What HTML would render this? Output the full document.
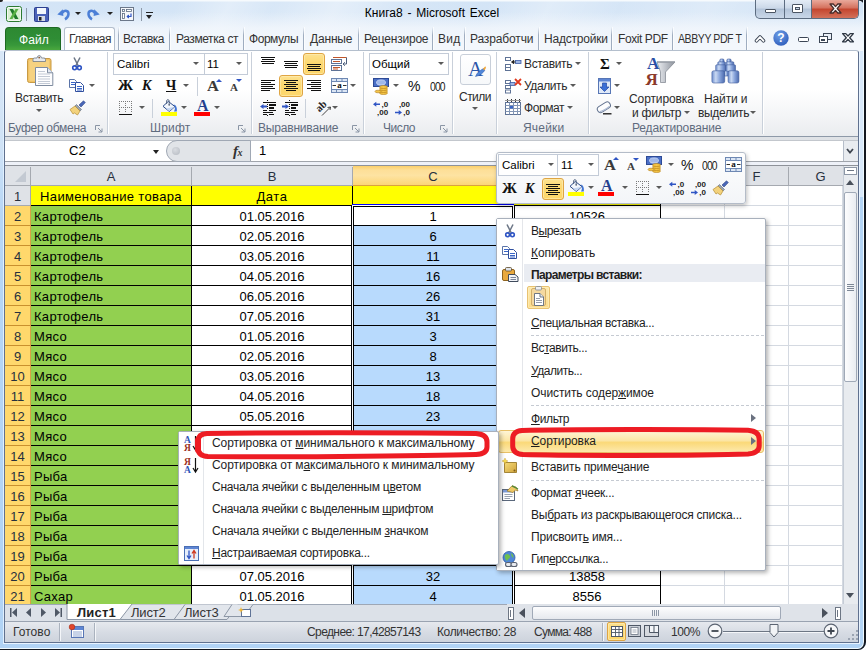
<!DOCTYPE html>
<html lang="ru">
<head>
<meta charset="utf-8">
<title>Книга8 - Microsoft Excel</title>
<style>
*{box-sizing:border-box;margin:0;padding:0}
html,body{width:866px;height:650px;overflow:hidden;background:#cfe0f3}
body{position:relative;font-family:"Liberation Sans",sans-serif;font-size:12px;color:#1e1e1e}
.abs,.abs>*{position:absolute}
#win{position:absolute;left:0;top:0;width:866px;height:650px;overflow:hidden;background:linear-gradient(180deg,#d8e7f7 0,#d8e7f7 60px,#cfe2f6 150px,#b6d6f6 215px,#b1d3f5 100%)}
#glass{position:absolute;left:0;top:0;width:866px;height:51px;background:
 linear-gradient(180deg,#f6fafd 0,#f6fafd 1px,rgba(255,255,255,0) 2px),
 linear-gradient(180deg,rgba(243,247,252,0) 12px,rgba(243,247,252,.8) 28px,#f3f7fc 44px),
 linear-gradient(115deg,rgba(255,255,255,0) 0,rgba(255,255,255,0) 20%,rgba(255,255,255,.35) 26%,rgba(255,255,255,.1) 31%,rgba(255,255,255,.4) 38%,rgba(255,255,255,.05) 46%,rgba(255,255,255,0) 55%,rgba(255,255,255,.3) 62%,rgba(255,255,255,.05) 70%,rgba(255,255,255,.25) 80%,rgba(255,255,255,0) 90%),
 linear-gradient(180deg,#d3e4f6,#d8e7f7)}
.t{position:absolute;white-space:pre;line-height:14px;height:14px}
.tc{text-align:center}
/* title */
#title{left:299px;width:266px;top:6px;text-align:center;font-size:12px;color:#000;word-spacing:1.5px}
/* tabs */
.tab{position:absolute;top:32px;height:14px;line-height:14px;font-size:12px;color:#333;white-space:pre;letter-spacing:-0.25px}
.tsep{position:absolute;top:27px;width:1px;height:23px;background:linear-gradient(180deg,rgba(150,165,185,0),#9fadc0 35%,#9fadc0 100%);box-shadow:1px 0 0 rgba(255,255,255,.7)}
#ribbon{position:absolute;left:4px;top:50px;width:855px;height:87px;border:1px solid #7f8da3;border-top-color:#b4bfcd;border-bottom-color:#8e99a8;border-radius:3px 3px 0 0;
 background:linear-gradient(180deg,#ffffff 0,#ffffff 45%,#f4f5f7 75%,#eaecef 100%)}
.gsep{position:absolute;top:52px;width:2px;height:82px;background:linear-gradient(90deg,#c9d0da 0,#c9d0da 1px,#fff 1px)}
.glab{position:absolute;top:121px;height:14px;line-height:14px;font-size:12px;color:#5f6b7e;white-space:pre;letter-spacing:-0.3px}
.rl{position:absolute;height:14px;line-height:14px;font-size:12px;color:#2b2b2b;white-space:pre;letter-spacing:-0.3px}
.dd{position:absolute;width:0;height:0;border-left:3px solid transparent;border-right:3px solid transparent;border-top:3px solid #5a5a5a}
.box{position:absolute;background:#fff;border:1px solid #c3cbd7}
.hl{position:absolute;border:1px solid #dfa543;border-radius:3px;background:linear-gradient(180deg,#fde291 0,#fdd870 45%,#fdd76c 100%);box-shadow:inset 0 0 0 1px rgba(255,240,190,.55)}
svg{position:absolute;overflow:visible}
.ct{font-size:13px;color:#000}
.mi{position:absolute;white-space:pre;height:14px;line-height:14px;font-size:12px;color:#1e1e1e;letter-spacing:-.2px}
.msep{position:absolute;left:531px;width:233px;height:0;border-top:1px dashed #c5cad2}
</style>
</head>
<body>
<div id="win">
<!-- ===== title bar ===== -->
<div id="glass"></div>
<div style="position:absolute;left:0;top:0;width:3px;height:2px;background:#222;border-bottom-right-radius:3px"></div>
<div style="position:absolute;left:858px;top:-2px;width:10px;height:9px;background:radial-gradient(circle at 0 100%,rgba(0,0,0,0) 0,rgba(0,0,0,0) 6px,#1a1f28 7px)"></div>
<!-- excel icon -->
<svg style="left:6px;top:6px" width="17" height="17" viewBox="0 0 17 17">
 <rect x="0.5" y="0.5" width="15" height="15" rx="2" fill="#f4faf2" stroke="#2c7a32"/>
 <rect x="2" y="2" width="12" height="12" fill="#d9efd3"/>
 <path d="M3.5 3 L7 3 L12.5 13 L9 13 Z" fill="#1f7a2a"/>
 <path d="M12.5 3 L9.5 3 L3.5 13 L6.5 13 Z" fill="#59b045"/>
</svg>
<div style="position:absolute;left:26px;top:8px;width:1px;height:13px;background:#8d99a8"></div>
<!-- save -->
<svg style="left:34px;top:7px" width="15" height="15" viewBox="0 0 15 15">
 <rect x="0.5" y="0.5" width="14" height="14" rx="1" fill="#4b62b8" stroke="#2c3f8f"/>
 <rect x="3" y="1" width="9" height="6" fill="#f4f7fc"/>
 <rect x="4" y="9" width="7" height="5" fill="#d7dbe6"/>
 <rect x="5" y="10" width="2.5" height="3.5" fill="#222"/>
</svg>
<!-- undo -->
<svg style="left:56px;top:7px" width="14" height="14" viewBox="0 0 14 14">
 <path d="M1.300 7.500 L6.800 2.200 L7.400 9 Z" fill="#4c7fd6"/>
 <path d="M6.500 5.600 C9 2.600 12.800 3.600 12.500 7.200 C12.300 9.600 11 11.200 9 12.300" fill="none" stroke="#4c7fd6" stroke-width="2.500"/>
</svg>
<div class="dd" style="left:75px;top:12px;border-top-color:#222"></div>
<!-- redo -->
<svg style="left:87px;top:7px" width="14" height="14" viewBox="0 0 14 14">
 <path d="M12.700 7.500 L7.200 2.200 L6.600 9 Z" fill="#4c7fd6"/>
 <path d="M7.500 5.600 C5 2.600 1.200 3.600 1.500 7.200 C1.700 9.600 3 11.200 5 12.300" fill="none" stroke="#4c7fd6" stroke-width="2.500"/>
</svg>
<div class="dd" style="left:107px;top:12px;border-top-color:#222"></div>
<!-- form icon -->
<svg style="left:120px;top:7px" width="14" height="14" viewBox="0 0 14 14">
 <rect x="0.500" y="0.500" width="13" height="13" fill="#f5f7fa" stroke="#6b7789"/>
 <rect x="2.500" y="2.500" width="2" height="2" fill="#fff" stroke="#5d6b80" stroke-width=".8"/>
 <rect x="6.500" y="2.500" width="5" height="2" fill="#fff" stroke="#5d6b80" stroke-width=".8"/>
 <rect x="2.500" y="6.500" width="2" height="5" fill="#fff" stroke="#5d6b80" stroke-width=".8"/>
 <path d="M11 6.500 V9.500 H7.500 M8.800 8 L7.300 9.500 L8.800 11" stroke="#2f55c4" stroke-width="1.200" fill="none"/>
</svg>
<div style="position:absolute;left:141px;top:8px;width:1px;height:13px;background:#8d99a8"></div>
<div style="position:absolute;left:146px;top:12px;width:7px;height:1px;background:#222"></div>
<div class="dd" style="left:146px;top:15px;border-top-color:#222;border-left-width:3.5px;border-right-width:3.5px;border-top-width:4px"></div>
<div id="title" class="t">Книга8 - Microsoft Excel</div>
<!-- window controls -->
<div style="position:absolute;left:755px;top:0;width:104px;height:19px;border:1px solid #5c6c80;border-top:0;border-radius:0 0 5px 5px;overflow:hidden;background:linear-gradient(180deg,#e3ecf6 0,#cbd8e8 45%,#b3c4d9 50%,#c9d7e8 100%)">
 <div style="position:absolute;left:28px;top:0;width:1px;height:18px;background:#5c6c80"></div>
 <div style="position:absolute;left:55px;top:0;width:1px;height:18px;background:#5c6c80"></div>
 <div style="position:absolute;left:56px;top:0;width:47px;height:18px;background:linear-gradient(180deg,#e9a99b 0,#d4705c 45%,#c4452e 50%,#d3715a 100%)"></div>
 <div style="position:absolute;left:9px;top:9px;width:11px;height:4px;border:1px solid #4b5563;background:#fff;border-radius:1px"></div>
 <div style="position:absolute;left:36px;top:4px;width:11px;height:9px;border:1px solid #4b5563;background:#fff;border-radius:1px"></div>
 <div style="position:absolute;left:39px;top:7px;width:5px;height:3px;border:1px solid #4b5563;background:#c8d5e6"></div>
 <svg style="left:73px;top:3px" width="13" height="11" viewBox="0 0 13 11"><path d="M1 1 H4.200 L6.500 3.600 L8.800 1 H12 L8.200 5.500 L12 10 H8.800 L6.500 7.400 L4.200 10 H1 L4.800 5.500 Z" fill="#fff" stroke="#4a2e2c" stroke-width="1.300" stroke-linejoin="round"/></svg>
</div>
<!-- ===== ribbon tabs ===== -->
<div style="position:absolute;left:5px;top:27px;width:56px;height:23px;border:1px solid #1d6a22;border-bottom:0;border-radius:4px 4px 0 0;background:linear-gradient(180deg,#2d8932 0,#2f8d35 50%,#38983a 78%,#4aa83e 100%)"></div>
<div class="tab" style="left:19px;color:#fff;top:33px;letter-spacing:0.1px">Файл</div>
<div style="position:absolute;left:64px;top:27px;width:51px;height:24px;border:1px solid #b4bfcd;border-bottom:0;border-radius:3px 3px 0 0;background:linear-gradient(180deg,#fdfeff,#fff)"></div>
<div class="tab" style="left:69px;letter-spacing:-0.53px">Главная</div>
<div class="tab" style="left:123px;letter-spacing:-0.52px">Вставка</div>
<div class="tab" style="left:176px;letter-spacing:-0.42px">Разметка ст</div>
<div class="tab" style="left:249px;letter-spacing:-0.45px">Формулы</div>
<div class="tab" style="left:310px;letter-spacing:-0.17px">Данные</div>
<div class="tab" style="left:364px;letter-spacing:-0.21px">Рецензирое</div>
<div class="tab" style="left:438px;letter-spacing:0.3px">Вид</div>
<div class="tab" style="left:470px;letter-spacing:-0.14px">Разработчи</div>
<div class="tab" style="left:544px;letter-spacing:-0.2px">Надстройки</div>
<div class="tab" style="left:618px;letter-spacing:-0.42px">Foxit PDF</div>
<div class="tab" style="left:678px;transform:scaleX(.88);transform-origin:0 0;letter-spacing:-0.5px">ABBYY PDF T</div>
<div class="tsep" style="left:118px"></div><div class="tsep" style="left:169px"></div><div class="tsep" style="left:243px"></div>
<div class="tsep" style="left:303px"></div><div class="tsep" style="left:358px"></div><div class="tsep" style="left:432px"></div>
<div class="tsep" style="left:464px"></div><div class="tsep" style="left:538px"></div><div class="tsep" style="left:611px"></div>
<div class="tsep" style="left:672px"></div><div class="tsep" style="left:746px"></div>
<!-- right-side tab icons -->
<svg style="left:755px;top:35px" width="10" height="8" viewBox="0 0 10 8"><path d="M1.500 5.800 L5 2 L8.500 5.800" fill="none" stroke="#3c4655" stroke-width="3.600" stroke-linejoin="round" stroke-linecap="round"/><path d="M1.500 5.800 L5 2 L8.500 5.800" fill="none" stroke="#fff" stroke-width="1.800" stroke-linejoin="round" stroke-linecap="round"/></svg>
<svg style="left:773px;top:30px" width="16" height="16" viewBox="0 0 16 16"><defs><radialGradient id="hg" cx=".4" cy=".3" r=".8"><stop offset="0" stop-color="#6fa0e8"/><stop offset="1" stop-color="#2a58b8"/></radialGradient></defs><circle cx="8" cy="8" r="7.7" fill="url(#hg)"/><text x="8" y="12.3" text-anchor="middle" font-family="Liberation Sans,sans-serif" font-weight="700" font-size="12" fill="#fff">?</text></svg>
<div style="position:absolute;left:798px;top:37px;width:11px;height:5px;border:1px solid #3c4655;border-radius:1.5px;background:#fff"></div>
<div style="position:absolute;left:823px;top:33px;width:9px;height:7px;border:1px solid #3c4655;background:#e9eff7"></div>
<div style="position:absolute;left:819px;top:36px;width:9px;height:7px;border:1px solid #3c4655;background:#fff"></div>
<div style="position:absolute;left:821px;top:39px;width:4px;height:2px;border:1px solid #3c4655"></div>
<svg style="left:842px;top:33px" width="12" height="10" viewBox="0 0 12 10"><path d="M0.600 0.600 H3.800 L6 3 L8.200 0.600 H11.400 L7.700 4.700 L11.400 8.800 H8.200 L6 6.400 L3.800 8.800 H0.600 L4.300 4.700 Z" fill="#fff" stroke="#2f3845" stroke-width="1.300" stroke-linejoin="round"/></svg>
<!-- ===== ribbon body ===== -->
<div id="ribbon"></div>
<div class="gsep" style="left:107px"></div><div class="gsep" style="left:251px"></div><div class="gsep" style="left:363px"></div>
<div class="gsep" style="left:452px"></div><div class="gsep" style="left:496px"></div><div class="gsep" style="left:588px"></div><div class="gsep" style="left:762px"></div>
<!-- group labels -->
<div class="glab" style="left:8px;letter-spacing:-0.28px">Буфер обмена</div>
<div class="glab" style="left:150px;letter-spacing:0.2px">Шрифт</div>
<div class="glab" style="left:258px;letter-spacing:-0.19px">Выравнивание</div>
<div class="glab" style="left:383px;letter-spacing:-0.5px">Число</div>
<div class="glab" style="left:523px;letter-spacing:0.2px">Ячейки</div>
<div class="glab" style="left:632px;letter-spacing:-0.15px">Редактирование</div>
<!-- dialog launchers -->
<svg style="left:95px;top:125px" width="8" height="8" viewBox="0 0 8 8"><path d="M0.5 5 V0.5 H5" fill="none" stroke="#8a95a5"/><path d="M3 3 L7 7 M7 3.5 V7 H3.5" fill="none" stroke="#8a95a5"/></svg>
<svg style="left:238px;top:125px" width="8" height="8" viewBox="0 0 8 8"><path d="M0.5 5 V0.5 H5" fill="none" stroke="#8a95a5"/><path d="M3 3 L7 7 M7 3.5 V7 H3.5" fill="none" stroke="#8a95a5"/></svg>
<svg style="left:352px;top:125px" width="8" height="8" viewBox="0 0 8 8"><path d="M0.5 5 V0.5 H5" fill="none" stroke="#8a95a5"/><path d="M3 3 L7 7 M7 3.5 V7 H3.5" fill="none" stroke="#8a95a5"/></svg>
<svg style="left:440px;top:125px" width="8" height="8" viewBox="0 0 8 8"><path d="M0.5 5 V0.5 H5" fill="none" stroke="#8a95a5"/><path d="M3 3 L7 7 M7 3.5 V7 H3.5" fill="none" stroke="#8a95a5"/></svg>

<!-- Clipboard group -->
<svg style="left:26px;top:55px" width="30" height="33" viewBox="0 0 30 33">
 <rect x="1.500" y="3.500" width="23.500" height="24" rx="2" fill="#f1c263" stroke="#c79a45"/>
 <rect x="3.300" y="5.300" width="20" height="20.500" rx="1" fill="#f8d88e" opacity=".7"/>
 <path d="M7 6.500 V4.500 Q7 3 8.500 3 H11 Q11.500 0.500 13.200 0.500 Q15 0.500 15.500 3 H18 Q19.500 3 19.500 4.500 V6.500 Z" fill="#e6e9ee" stroke="#6f7986" stroke-width=".8"/>
 <circle cx="13.200" cy="2.600" r=".9" fill="#8a5a3a"/>
 <path d="M9.500 12.500 H21.500 L26.800 17.800 V30.500 H9.500 Z" fill="#fdfdfe" stroke="#7f8ca0"/>
 <path d="M21.500 12.500 V17.800 H26.800" fill="#e3e8f0" stroke="#7f8ca0"/>
 <path d="M12 16.500 H19 M12 19 H24 M12 21.500 H24 M12 24 H24 M12 26.500 H24 M12 28.500 H24" stroke="#c3cad5" stroke-width="1"/>
</svg>
<div class="rl" style="left:15px;top:91px;letter-spacing:-0.34px">Вставить</div>
<div class="dd" style="left:36px;top:109px"></div>
<!-- scissors -->
<svg style="left:72px;top:57px" width="10" height="14" viewBox="0 0 10 14">
 <path d="M2 0.500 L6.300 9 M8 0.500 L3.700 9" stroke="#6b7585" stroke-width="1.500" fill="none"/>
 <circle cx="2.600" cy="10.800" r="1.900" fill="none" stroke="#2f55c4" stroke-width="1.600"/>
 <circle cx="7.400" cy="10.800" r="1.900" fill="none" stroke="#2f55c4" stroke-width="1.600"/>
</svg>
<!-- copy -->
<svg style="left:69px;top:79px" width="15" height="13" viewBox="0 0 15 13">
 <path d="M0.500 0.500 H5.500 L7.500 2.500 V8.500 H0.500 Z" fill="#fff" stroke="#5b74a8"/>
 <path d="M2 3.500 H6 M2 5.500 H6" stroke="#3a66c8" stroke-width="1"/>
 <path d="M6.500 3.500 H11.500 L14.500 6.500 V12.500 H6.500 Z" fill="#fff" stroke="#2f4f9f"/>
 <path d="M8 7.500 H13 M8 9.500 H13 M8 11 H13" stroke="#3a66c8" stroke-width="1"/>
</svg>
<div class="dd" style="left:89px;top:84px"></div>
<!-- format painter -->
<svg style="left:69px;top:100px" width="17" height="16" viewBox="0 0 17 16">
 <path d="M10 5 L14.5 0.8 L16.3 2.6 L12 7 Z" fill="#4a67b8" stroke="#2f4687" stroke-width=".6"/>
 <path d="M7.5 4.5 L12.5 9.5 L11 11 L6 6 Z" fill="#9aa3b0" stroke="#5e6877" stroke-width=".6"/>
 <path d="M6 6 L11 11 L8.5 15 L5.5 13 L4 14 L1 9.5 Z" fill="#f3d27c" stroke="#b58e35" stroke-width=".7"/>
</svg>
<!-- Font group -->
<div class="box" style="left:113px;top:53px;width:92px;height:22px"></div>
<div class="box" style="left:204px;top:53px;width:44px;height:22px"></div>
<div class="rl" style="left:117px;top:57px;color:#000;letter-spacing:0;font-size:11.500px">Calibri</div>
<div class="rl" style="left:207px;top:57px;color:#000;letter-spacing:0;font-size:11.500px">11</div>
<div class="dd" style="left:193px;top:62px"></div>
<div class="dd" style="left:236px;top:62px"></div>
<div class="rl" style="left:118px;top:78px;font:bold 14px/16px 'Liberation Serif',serif;height:16px;color:#111;letter-spacing:0;transform:scaleX(1.08);transform-origin:0 0">Ж</div>
<div class="rl" style="left:142px;top:78px;font:italic bold 14px/16px 'Liberation Serif',serif;height:16px;color:#111;letter-spacing:0">К</div>
<div class="rl" style="left:166px;top:78px;font:bold 14px/16px 'Liberation Serif',serif;height:16px;color:#111;letter-spacing:0;text-decoration:underline">Ч</div>
<div class="dd" style="left:183px;top:84px"></div>
<div style="position:absolute;left:197px;top:77px;width:1px;height:19px;background:#c9d0da"></div>
<div class="rl" style="left:207px;top:78px;font:bold 15px/16px 'Liberation Serif',serif;height:16px;color:#3a3a3a;letter-spacing:0;transform:scaleX(1.1);transform-origin:0 0">А</div>
<div class="dd" style="left:216px;top:79px;border-top:0;border-bottom:3px solid #2f55c4"></div>
<div class="rl" style="left:230px;top:81px;font:bold 11px/12px 'Liberation Serif',serif;height:12px;color:#3a3a3a;letter-spacing:0">А</div>
<div class="dd" style="left:236px;top:79px;border-top-color:#2f55c4"></div>
<!-- borders icon -->
<svg style="left:119px;top:101px" width="14" height="14" viewBox="0 0 14 14" shape-rendering="crispEdges">
 <path d="M0 0.5 H13 M0 6.500 H13 M0.500 0 V12 M6.500 0 V12 M12.500 0 V12" stroke="#7a7a7a" stroke-width="1" stroke-dasharray="1 1" fill="none"/>
 <path d="M0 13 H13" stroke="#111" stroke-width="1"/>
</svg>
<div class="dd" style="left:139px;top:106px"></div>
<div style="position:absolute;left:152px;top:99px;width:1px;height:19px;background:#c9d0da"></div>
<!-- fill bucket -->
<svg style="left:161px;top:99px" width="17" height="18" viewBox="0 0 17 18">
 <path d="M12.500 5.500 C15.500 6 16.300 9 15.800 12.600 H13 C13.800 11 14.200 9 13.800 7.500 Z" fill="#3f74d6"/>
 <path d="M7.300 2.400 L13.900 7.600 L8.400 12.500 L2 7.300 Z" fill="#f2f6fc" stroke="#2a4a8a" stroke-width="1"/>
 <path d="M5 9.600 L8.400 12.300 L13.500 7.800 Z" fill="#c4d6f2"/>
 <path d="M5.600 5 V1.800 C5.600 0.300 8.200 0.300 8.200 1.800 V5.500" fill="none" stroke="#4d5f7c" stroke-width=".9"/>
 <circle cx="8.200" cy="5.800" r=".9" fill="#59657a"/>
 <rect x="0" y="13" width="16" height="4" fill="#ffff00"/>
</svg>
<div class="dd" style="left:181px;top:106px"></div>
<!-- font color -->
<div class="rl" style="left:197px;top:98px;font:bold 16px/16px 'Liberation Serif',serif;height:16px;color:#24408e;letter-spacing:0">А</div>
<div style="position:absolute;left:194px;top:112px;width:16px;height:4px;background:#ff0000"></div>
<div class="dd" style="left:214px;top:106px"></div>
<!-- Alignment group -->
<div class="hl" style="left:303px;top:53px;width:22px;height:22px"></div>
<div class="hl" style="left:279px;top:75px;width:24px;height:22px"></div>
<svg style="left:261px;top:57px" width="15" height="8" viewBox="0 0 15 8" shape-rendering="crispEdges"><g fill="#111"><rect x="0" y="0" width="14" height="1"/><rect x="1" y="2" width="12" height="1"/><rect x="0" y="4" width="14" height="1"/><rect x="1" y="6" width="12" height="1"/></g></svg>
<svg style="left:284px;top:61px" width="15" height="8" viewBox="0 0 15 8" shape-rendering="crispEdges"><g fill="#111"><rect x="0" y="0" width="14" height="1"/><rect x="1" y="2" width="12" height="1"/><rect x="0" y="4" width="14" height="1"/><rect x="1" y="6" width="12" height="1"/></g></svg>
<svg style="left:307px;top:64px" width="15" height="8" viewBox="0 0 15 8" shape-rendering="crispEdges"><g fill="#111"><rect x="0" y="0" width="14" height="1"/><rect x="1" y="2" width="12" height="1"/><rect x="0" y="4" width="14" height="1"/><rect x="1" y="6" width="12" height="1"/></g></svg>
<!-- wrap text -->
<svg style="left:331px;top:56px" width="17" height="16" viewBox="0 0 17 16">
 <rect x="0.5" y="3.5" width="10" height="4" fill="#fff" stroke="#5f7396"/><rect x="0.5" y="9.5" width="10" height="5" fill="#fff" stroke="#5f7396"/>
 <path d="M2 1.5 H15.5 M2 5.5 H9 M2 11.5 H9 M2 13 H7" stroke="#c0562a" stroke-width="1"/>
 <path d="M15.5 1.5 V8 L12 8 M13.8 6.2 L12 8 L13.8 9.8" stroke="#4d5f7c" fill="none" stroke-width="1"/>
</svg>
<svg style="left:261px;top:80px" width="15" height="12" viewBox="0 0 15 12" shape-rendering="crispEdges"><g fill="#111"><rect x="0" y="0" width="14" height="1"/><rect x="0" y="2" width="10" height="1"/><rect x="0" y="4" width="14" height="1"/><rect x="0" y="6" width="12" height="1"/><rect x="0" y="8" width="14" height="1"/><rect x="0" y="10" width="9" height="1"/></g></svg>
<svg style="left:284px;top:80px" width="15" height="12" viewBox="0 0 15 12" shape-rendering="crispEdges"><g fill="#111"><rect x="0" y="0" width="14" height="1"/><rect x="2" y="2" width="10" height="1"/><rect x="0" y="4" width="14" height="1"/><rect x="2" y="6" width="10" height="1"/><rect x="0" y="8" width="14" height="1"/><rect x="2" y="10" width="10" height="1"/></g></svg>
<svg style="left:307px;top:80px" width="15" height="12" viewBox="0 0 15 12" shape-rendering="crispEdges"><g fill="#111"><rect x="0" y="0" width="14" height="1"/><rect x="4" y="2" width="10" height="1"/><rect x="0" y="4" width="14" height="1"/><rect x="4" y="6" width="10" height="1"/><rect x="0" y="8" width="14" height="1"/><rect x="4" y="10" width="10" height="1"/></g></svg>
<!-- merge -->
<svg style="left:331px;top:78px" width="17" height="15" viewBox="0 0 17 15">
 <rect x="0.5" y="0.5" width="16" height="14" fill="#dbe6f5" stroke="#6e88b3"/>
 <path d="M0.5 3.5 H16.5 M0.5 11.5 H16.5 M5.5 0.5 V3.5 M11 0.5 V3.5 M5.5 11.5 V14.5 M11 11.5 V14.5" stroke="#6e88b3" fill="none"/>
 <rect x="1" y="4" width="15" height="7" fill="#fff"/>
 <text x="8.5" y="10.3" text-anchor="middle" font-family="Liberation Serif,serif" font-weight="700" font-size="9" fill="#111">a</text>
 <path d="M1.5 7.5 H5 M15.5 7.5 H12" stroke="#333" stroke-width="1"/>
</svg>
<div class="dd" style="left:350px;top:84px"></div>
<!-- indents -->
<svg style="left:260px;top:100px" width="17" height="16" viewBox="0 0 17 16" shape-rendering="crispEdges">
 <g fill="#111"><rect x="7" y="0" width="1" height="16" fill="#555" opacity=".0"/><rect x="3" y="2" width="13" height="1"/><rect x="9" y="4" width="7" height="2"/><rect x="9" y="7" width="5" height="2"/><rect x="9" y="10" width="7" height="1"/><rect x="3" y="10" width="4" height="1"/><rect x="3" y="12" width="10" height="1"/><rect x="3" y="14" width="4" height="1"/><rect x="9" y="14" width="5" height="1"/>
 <rect x="7" y="0" width="1" height="1"/><rect x="7" y="4" width="1" height="1"/><rect x="7" y="6" width="1" height="1"/><rect x="7" y="8" width="1" height="1"/><rect x="7" y="12" width="1" height="1"/><rect x="7" y="15" width="1" height="1"/></g>
 <path d="M0 6.500 L3.500 4 V5.500 H7 V7.500 H3.500 V9 Z" fill="#2f55c4" shape-rendering="auto"/>
</svg>
<svg style="left:282px;top:100px" width="17" height="16" viewBox="0 0 17 16" shape-rendering="crispEdges">
 <g fill="#111"><rect x="3" y="2" width="13" height="1"/><rect x="9" y="4" width="7" height="2"/><rect x="9" y="7" width="5" height="2"/><rect x="9" y="10" width="7" height="1"/><rect x="3" y="10" width="4" height="1"/><rect x="3" y="12" width="10" height="1"/><rect x="3" y="14" width="4" height="1"/><rect x="9" y="14" width="5" height="1"/>
 <rect x="7" y="0" width="1" height="1"/><rect x="7" y="4" width="1" height="1"/><rect x="7" y="6" width="1" height="1"/><rect x="7" y="8" width="1" height="1"/><rect x="7" y="12" width="1" height="1"/><rect x="7" y="15" width="1" height="1"/></g>
 <path d="M7 6.500 L3.500 4 V5.500 H0 V7.500 H3.500 V9 Z" fill="#2f55c4" shape-rendering="auto"/>
</svg>
<div style="position:absolute;left:305px;top:99px;width:1px;height:19px;background:#c9d0da"></div>
<!-- orientation -->
<svg style="left:314px;top:100px" width="18" height="16" viewBox="0 0 18 16">
 <text x="0" y="0" transform="translate(5.500,12.500) rotate(-45)" font-family="Liberation Serif,serif" font-size="10.500" font-weight="700" fill="#222">ab</text>
 <path d="M8 15.500 L16.500 7 M16.500 7 L13.500 7.500 M16.500 7 L16 10" stroke="#444" stroke-width="1" fill="none"/>
</svg>
<div class="dd" style="left:332px;top:106px"></div>

<!-- Number group -->
<div class="box" style="left:369px;top:53px;width:80px;height:22px"></div>
<div class="rl" style="left:372px;top:57px;color:#000;letter-spacing:0;font-size:11.500px">Общий</div>
<div class="dd" style="left:438px;top:62px"></div>
<svg style="left:373px;top:78px" width="18" height="17" viewBox="0 0 18 17">
 <rect x="0.5" y="0.5" width="15" height="8" fill="#4a6fc6" stroke="#2d4a96"/>
 <ellipse cx="8" cy="4.5" rx="4.5" ry="2.6" fill="#9fb8ea" stroke="#dfe8fa" stroke-width=".7"/>
 <g fill="#f5c646" stroke="#b07a18" stroke-width=".6"><ellipse cx="10.5" cy="15" rx="4" ry="1.5"/><ellipse cx="10.5" cy="13" rx="4" ry="1.5"/><ellipse cx="10.5" cy="11" rx="4" ry="1.5"/><ellipse cx="10.5" cy="9" rx="4" ry="1.5"/><ellipse cx="5" cy="13.5" rx="3" ry="1.3"/></g>
</svg>
<div class="dd" style="left:393px;top:84px"></div>
<div class="rl" style="left:408px;top:78px;font-size:14px;line-height:16px;height:16px;color:#111;letter-spacing:0">%</div>
<div class="rl" style="left:430px;top:79px;font-size:12px;line-height:16px;height:16px;color:#222;letter-spacing:-1px;transform:scale(.86,1.12);transform-origin:0 50%">000</div>
<svg style="left:372px;top:100px" width="17" height="17" viewBox="0 0 17 17">
 <path d="M1 4.200 L4.300 1.700 V3.400 H8 V5 H4.300 V6.700 Z" fill="#2f55c4"/>
 <text x="16.200" y="7" text-anchor="end" font-family="Liberation Sans,sans-serif" font-weight="700" font-size="8" fill="#222">,0</text>
 <text x="16.200" y="15.300" text-anchor="end" font-family="Liberation Sans,sans-serif" font-weight="700" font-size="8" fill="#222">,00</text>
</svg>
<svg style="left:394px;top:100px" width="17" height="17" viewBox="0 0 17 17">
 <text x="16" y="7" text-anchor="end" font-family="Liberation Sans,sans-serif" font-weight="700" font-size="8" fill="#222">,00</text>
 <path d="M8 12.500 L4.700 10 V11.700 H1 V13.300 H4.700 V15 Z" fill="#2f55c4"/>
 <text x="16" y="15.300" text-anchor="end" font-family="Liberation Sans,sans-serif" font-weight="700" font-size="8" fill="#222">,0</text>
</svg>

<!-- Styles group -->
<div style="position:absolute;left:460px;top:54px;width:31px;height:31px;border:1px solid #c8cfd9;border-radius:3px;background:linear-gradient(180deg,#fff,#f6f8fa)"></div>
<svg style="left:466px;top:58px" width="22" height="22" viewBox="0 0 22 22">
 <text x="2" y="18" font-family="Liberation Serif,serif" font-size="21" fill="#2b55a8">A</text>
 <path d="M9.500 18.500 C11 14.500 14 12.500 17.500 10.500 L19 12 C17 15 14.500 17.500 9.500 18.500 Z" fill="#4f86d9" stroke="#2b55a8" stroke-width=".5"/>
 <path d="M16.800 11 L19.300 8.300 L20 9.800 L18.600 12.300 Z" fill="#f0a63a"/>
</svg>
<div class="rl" style="left:459px;top:90px;letter-spacing:-0.52px">Стили</div>
<div class="dd" style="left:472px;top:107px"></div>
<!-- Cells group -->
<svg style="left:505px;top:56px" width="17" height="16" viewBox="0 0 17 16">
 <g fill="#fff" stroke="#5f7396" stroke-width="1"><rect x="0.500" y="1.500" width="5" height="3"/><rect x="0.500" y="8.500" width="5" height="3"/><rect x="0.500" y="11.500" width="5" height="3"/></g>
 <rect x="10.500" y="4.500" width="5.500" height="3" fill="#9db5e2" stroke="#3e5ea8" stroke-width=".8"/>
 <path d="M6.500 6 L8.800 4.300 V7.700 Z M8.800 6 H10.500" fill="#111" stroke="#111" stroke-width=".8"/>
</svg>
<div class="rl" style="left:524px;top:57px;letter-spacing:-0.34px">Вставить</div>
<div class="dd" style="left:575px;top:62px"></div>
<svg style="left:505px;top:78px" width="17" height="16" viewBox="0 0 17 16">
 <g fill="#fff" stroke="#5f7396" stroke-width="1"><rect x="0.5" y="2.5" width="5" height="3"/><rect x="0.5" y="7.5" width="5" height="3"/><rect x="0.5" y="12" width="5" height="3"/></g>
 <rect x="5" y="4.5" width="5" height="3" fill="#9db5e2" stroke="#3e5ea8" stroke-width=".8"/>
 <path d="M10 1 L16 7 M16 1 L10 7" stroke="#e0391e" stroke-width="1.8"/>
</svg>
<div class="rl" style="left:524px;top:79px;letter-spacing:-0.39px">Удалить</div>
<div class="dd" style="left:570px;top:84px"></div>
<svg style="left:505px;top:99px" width="17" height="17" viewBox="0 0 17 17">
 <rect x="0.5" y="3.5" width="15" height="12" fill="#fff" stroke="#5f7396"/>
 <path d="M0.5 6.5 H15.5 M0.5 9.5 H15.5 M0.5 12.5 H15.5 M4.5 3.5 V15.5 M8.5 3.5 V15.5 M12.5 3.5 V15.5" stroke="#8396b5" stroke-width="1"/>
 <rect x="5" y="7" width="3" height="2.5" fill="#3a66c8"/>
 <path d="M0.5 1.5 H15.5 M2.5 0 V3 M6.5 0 V3 M10.5 0 V3 M14.5 0 V3" stroke="#333" stroke-width="1" stroke-dasharray="1 1"/>
</svg>
<div class="rl" style="left:524px;top:101px;letter-spacing:-0.43px">Формат</div>
<div class="dd" style="left:567px;top:106px"></div>

<!-- Editing group -->
<div class="rl" style="left:600px;top:55px;font:bold 15px/18px 'Liberation Serif',serif;height:18px;color:#111;letter-spacing:0">Σ</div>
<div class="dd" style="left:616px;top:62px"></div>
<svg style="left:598px;top:78px" width="14" height="16" viewBox="0 0 14 16">
 <rect x="0.5" y="0.5" width="12" height="15" fill="#dfe9f8" stroke="#5776b5"/>
 <rect x="1" y="1" width="11" height="2.5" fill="#5e86d4"/>
 <path d="M4.5 5 H8.500 V9 H11 L6.5 13.5 L2 9 H4.5 Z" fill="#3a6fd6" stroke="#2448a0" stroke-width=".7"/>
</svg>
<div class="dd" style="left:614px;top:84px"></div>
<svg style="left:597px;top:101px" width="16" height="14" viewBox="0 0 16 14">
 <g transform="rotate(-32 7 6.500)"><rect x="0" y="3" width="14" height="6.500" rx="3" fill="#fdfdfe" stroke="#5f6f8c" stroke-width="1"/><path d="M1 7.500 C3 9 8 9 12.500 8.500" stroke="#aebbd3" stroke-width="1.300" fill="none"/></g>
 <path d="M6 12.800 H14.500" stroke="#111" stroke-width="1.300"/>
</svg>
<div class="dd" style="left:614px;top:106px"></div>
<!-- sort & filter icon -->
<svg style="left:644px;top:55px" width="33" height="32" viewBox="0 0 33 32">
 <defs><linearGradient id="fun" x1="0" x2="1"><stop offset="0" stop-color="#eceef1"/><stop offset=".45" stop-color="#c2c6cd"/><stop offset="1" stop-color="#8d929b"/></linearGradient></defs>
 <path d="M13 7 H31 L21.500 17 V27.500 H16.500 V17 Z" fill="url(#fun)" stroke="#7d838d" stroke-width=".7"/>
 <path d="M13 7 H31" stroke="#9a9fa8" stroke-width="1.400"/>
 <text x="3" y="14.300" font-family="Liberation Serif,serif" font-weight="700" font-size="17" fill="#2a4fa5">A</text>
 <text x="1.500" y="29.500" font-family="Liberation Serif,serif" font-weight="700" font-size="17" fill="#8c3a2a">Я</text>
</svg>
<div class="rl" style="left:629px;top:92px;letter-spacing:-0.1px">Сортировка</div>
<div class="rl" style="left:632px;top:106px;letter-spacing:-0.23px">и фильтр</div>
<div class="dd" style="left:684px;top:111px"></div>
<!-- binoculars -->
<svg style="left:710px;top:57px" width="31" height="28" viewBox="0 0 31 28">
 <defs><linearGradient id="bn" x1="0" x2="1"><stop offset="0" stop-color="#6f8fcf"/><stop offset=".3" stop-color="#c9d9f3"/><stop offset=".6" stop-color="#8aa6dc"/><stop offset="1" stop-color="#4a69ad"/></linearGradient></defs>
 <g fill="url(#bn)" stroke="#3f5c9c" stroke-width=".6">
  <rect x="14.200" y="13.500" width="4.400" height="5.500"/>
  <rect x="9.800" y="2" width="4.200" height="3.500" rx="1.200"/><rect x="16.900" y="2" width="4.200" height="3.500" rx="1.200"/>
  <rect x="7.800" y="4.800" width="7.600" height="4" rx="1"/><rect x="16.200" y="4.800" width="7.600" height="4" rx="1"/>
  <rect x="5.700" y="7.800" width="10.300" height="6.500" rx="1"/><rect x="16" y="7.800" width="9.500" height="6.500" rx="1"/>
  <rect x="1.900" y="13.800" width="12.800" height="12.200" rx="1.800"/><rect x="18.100" y="13.800" width="10.800" height="12.200" rx="1.800"/>
 </g>
</svg>
<div class="rl" style="left:704px;top:92px;letter-spacing:-0.13px">Найти и</div>
<div class="rl" style="left:698px;top:106px;letter-spacing:-0.32px">выделить</div>
<div class="dd" style="left:750px;top:111px"></div>
<!-- ===== formula bar ===== -->
<div style="position:absolute;left:5px;top:137px;width:853px;height:29px;background:linear-gradient(180deg,#dfe2e6 0,#dfe2e6 24px,#eef1f8 24px,#eef1f8 28px,#8e9299 28px)"></div>
<div style="position:absolute;left:5px;top:140px;width:853px;height:22px;background:#fff;border-top:1px solid #c3c7cd;border-bottom:1px solid #a0a4ab"></div>
<div class="t" style="left:69px;top:144px;font-size:13px;color:#000">C2</div>
<div class="dd" style="left:153px;top:150px;border-top-color:#222;border-left-width:3.5px;border-right-width:3.5px;border-top-width:4px"></div>
<div style="position:absolute;left:166px;top:140px;width:85px;height:22px;background:#e1e4e8;border:1px solid #a0a8b4;border-radius:11px 0 0 11px"></div>
<div style="position:absolute;left:172px;top:147px;width:8px;height:8px;border-radius:50%;background:radial-gradient(circle at 40% 35%,#d9dce1,#b4b9c1)"></div>
<div class="t" style="left:233px;top:143px;font:italic bold 15px/16px 'Liberation Serif',serif;height:16px;color:#333;letter-spacing:-.5px">f<span style="font-size:10px">x</span></div>
<div class="t" style="left:259px;top:144px;font-size:13px;color:#000">1</div>
<div style="position:absolute;left:843px;top:141px;width:15px;height:20px;background:#e9ecf0;border-left:1px solid #b5bdc9"></div>
<svg style="left:846px;top:148px" width="8" height="6" viewBox="0 0 8 6"><path d="M1 1 L4 4.500 L7 1" fill="none" stroke="#3f4650" stroke-width="1.800"/></svg>
<!-- ===== grid ===== -->
<div style="position:absolute;left:5px;top:166px;width:838px;height:438px;background:#fff"></div>
<div style="position:absolute;left:5px;top:166px;width:838px;height:20px;background:#dfe2e7;border-top:0;border-bottom:1px solid #a5a9b0"></div>
<div style="position:absolute;left:353px;top:166px;width:160px;height:19px;background:linear-gradient(180deg,#fbd06a 0,#fddf98 22%,#fde3a2 50%,#fcd677 100%)"></div>
<div style="position:absolute;left:353px;top:185px;width:160px;height:1px;background:#d9a241"></div>
<div style="position:absolute;left:191px;top:167px;width:1px;height:18px;background:#a5a9b0"></div>
<div class="t tc" style="left:31px;width:160px;top:170px;font-size:13px;color:#27303d">A</div>
<div style="position:absolute;left:352px;top:167px;width:1px;height:18px;background:#a5a9b0"></div>
<div class="t tc" style="left:192px;width:160px;top:170px;font-size:13px;color:#27303d">B</div>
<div style="position:absolute;left:513px;top:167px;width:1px;height:18px;background:#a5a9b0"></div>
<div class="t tc" style="left:353px;width:160px;top:170px;font-size:13px;color:#27303d">C</div>
<div style="position:absolute;left:660px;top:167px;width:1px;height:18px;background:#a5a9b0"></div>
<div class="t tc" style="left:514px;width:146px;top:170px;font-size:13px;color:#27303d">D</div>
<div style="position:absolute;left:724px;top:167px;width:1px;height:18px;background:#a5a9b0"></div>
<div class="t tc" style="left:661px;width:63px;top:170px;font-size:13px;color:#27303d">E</div>
<div style="position:absolute;left:788px;top:167px;width:1px;height:18px;background:#a5a9b0"></div>
<div class="t tc" style="left:725px;width:63px;top:170px;font-size:13px;color:#27303d">F</div>
<div class="t tc" style="left:789px;width:63px;top:170px;font-size:13px;color:#27303d">G</div>
<div style="position:absolute;left:30px;top:167px;width:1px;height:18px;background:#a5a9b0"></div>
<svg style="left:14px;top:170px" width="13" height="13" viewBox="0 0 13 13"><path d="M12 1 V12 H1 Z" fill="#c3c9d2"/></svg>
<div style="position:absolute;left:724px;top:186px;width:1px;height:418px;background:#d4d9e1"></div>
<div style="position:absolute;left:788px;top:186px;width:1px;height:418px;background:#d4d9e1"></div>
<div style="position:absolute;left:842px;top:186px;width:1px;height:418px;background:#d4d9e1"></div>
<div style="position:absolute;left:661px;top:205px;width:182px;height:1px;background:#d4d9e1"></div>
<div style="position:absolute;left:661px;top:225px;width:182px;height:1px;background:#d4d9e1"></div>
<div style="position:absolute;left:661px;top:245px;width:182px;height:1px;background:#d4d9e1"></div>
<div style="position:absolute;left:661px;top:265px;width:182px;height:1px;background:#d4d9e1"></div>
<div style="position:absolute;left:661px;top:285px;width:182px;height:1px;background:#d4d9e1"></div>
<div style="position:absolute;left:661px;top:305px;width:182px;height:1px;background:#d4d9e1"></div>
<div style="position:absolute;left:661px;top:325px;width:182px;height:1px;background:#d4d9e1"></div>
<div style="position:absolute;left:661px;top:345px;width:182px;height:1px;background:#d4d9e1"></div>
<div style="position:absolute;left:661px;top:365px;width:182px;height:1px;background:#d4d9e1"></div>
<div style="position:absolute;left:661px;top:385px;width:182px;height:1px;background:#d4d9e1"></div>
<div style="position:absolute;left:661px;top:405px;width:182px;height:1px;background:#d4d9e1"></div>
<div style="position:absolute;left:661px;top:425px;width:182px;height:1px;background:#d4d9e1"></div>
<div style="position:absolute;left:661px;top:445px;width:182px;height:1px;background:#d4d9e1"></div>
<div style="position:absolute;left:661px;top:465px;width:182px;height:1px;background:#d4d9e1"></div>
<div style="position:absolute;left:661px;top:485px;width:182px;height:1px;background:#d4d9e1"></div>
<div style="position:absolute;left:661px;top:505px;width:182px;height:1px;background:#d4d9e1"></div>
<div style="position:absolute;left:661px;top:525px;width:182px;height:1px;background:#d4d9e1"></div>
<div style="position:absolute;left:661px;top:545px;width:182px;height:1px;background:#d4d9e1"></div>
<div style="position:absolute;left:661px;top:565px;width:182px;height:1px;background:#d4d9e1"></div>
<div style="position:absolute;left:661px;top:585px;width:182px;height:1px;background:#d4d9e1"></div>
<div style="position:absolute;left:31px;top:186px;width:629px;height:19px;background:#ffff00"></div>
<div style="position:absolute;left:31px;top:206px;width:160px;height:398px;background:#92d050"></div>
<div style="position:absolute;left:354px;top:226px;width:159px;height:378px;background:#b8dafd"></div>
<div style="position:absolute;left:5px;top:186px;width:26px;height:19px;background:#dfe2e7;border-right:1px solid #a5a9b0"></div>
<div style="position:absolute;left:5px;top:205px;width:26px;height:399px;background:#ffd86c;border-right:1px solid #d9a045"></div>
<div class="t tc" style="left:5px;width:25px;top:190px;font-size:13px;color:#27303d">1</div>
<div style="position:absolute;left:5px;top:205px;width:25px;height:1px;background:#a5a9b0"></div>
<div style="position:absolute;left:31px;top:205px;width:630px;height:1px;background:#000"></div>
<div class="t tc" style="left:5px;width:25px;top:210px;font-size:13px;color:#27303d">2</div>
<div style="position:absolute;left:5px;top:225px;width:25px;height:1px;background:#c9902f"></div>
<div style="position:absolute;left:31px;top:225px;width:630px;height:1px;background:#000"></div>
<div class="t tc" style="left:5px;width:25px;top:230px;font-size:13px;color:#27303d">3</div>
<div style="position:absolute;left:5px;top:245px;width:25px;height:1px;background:#c9902f"></div>
<div style="position:absolute;left:31px;top:245px;width:630px;height:1px;background:#000"></div>
<div class="t tc" style="left:5px;width:25px;top:250px;font-size:13px;color:#27303d">4</div>
<div style="position:absolute;left:5px;top:265px;width:25px;height:1px;background:#c9902f"></div>
<div style="position:absolute;left:31px;top:265px;width:630px;height:1px;background:#000"></div>
<div class="t tc" style="left:5px;width:25px;top:270px;font-size:13px;color:#27303d">5</div>
<div style="position:absolute;left:5px;top:285px;width:25px;height:1px;background:#c9902f"></div>
<div style="position:absolute;left:31px;top:285px;width:630px;height:1px;background:#000"></div>
<div class="t tc" style="left:5px;width:25px;top:290px;font-size:13px;color:#27303d">6</div>
<div style="position:absolute;left:5px;top:305px;width:25px;height:1px;background:#c9902f"></div>
<div style="position:absolute;left:31px;top:305px;width:630px;height:1px;background:#000"></div>
<div class="t tc" style="left:5px;width:25px;top:310px;font-size:13px;color:#27303d">7</div>
<div style="position:absolute;left:5px;top:325px;width:25px;height:1px;background:#c9902f"></div>
<div style="position:absolute;left:31px;top:325px;width:630px;height:1px;background:#000"></div>
<div class="t tc" style="left:5px;width:25px;top:330px;font-size:13px;color:#27303d">8</div>
<div style="position:absolute;left:5px;top:345px;width:25px;height:1px;background:#c9902f"></div>
<div style="position:absolute;left:31px;top:345px;width:630px;height:1px;background:#000"></div>
<div class="t tc" style="left:5px;width:25px;top:350px;font-size:13px;color:#27303d">9</div>
<div style="position:absolute;left:5px;top:365px;width:25px;height:1px;background:#c9902f"></div>
<div style="position:absolute;left:31px;top:365px;width:630px;height:1px;background:#000"></div>
<div class="t tc" style="left:5px;width:25px;top:370px;font-size:13px;color:#27303d">10</div>
<div style="position:absolute;left:5px;top:385px;width:25px;height:1px;background:#c9902f"></div>
<div style="position:absolute;left:31px;top:385px;width:630px;height:1px;background:#000"></div>
<div class="t tc" style="left:5px;width:25px;top:390px;font-size:13px;color:#27303d">11</div>
<div style="position:absolute;left:5px;top:405px;width:25px;height:1px;background:#c9902f"></div>
<div style="position:absolute;left:31px;top:405px;width:630px;height:1px;background:#000"></div>
<div class="t tc" style="left:5px;width:25px;top:410px;font-size:13px;color:#27303d">12</div>
<div style="position:absolute;left:5px;top:425px;width:25px;height:1px;background:#c9902f"></div>
<div style="position:absolute;left:31px;top:425px;width:630px;height:1px;background:#000"></div>
<div class="t tc" style="left:5px;width:25px;top:430px;font-size:13px;color:#27303d">13</div>
<div style="position:absolute;left:5px;top:445px;width:25px;height:1px;background:#c9902f"></div>
<div style="position:absolute;left:31px;top:445px;width:630px;height:1px;background:#000"></div>
<div class="t tc" style="left:5px;width:25px;top:450px;font-size:13px;color:#27303d">14</div>
<div style="position:absolute;left:5px;top:465px;width:25px;height:1px;background:#c9902f"></div>
<div style="position:absolute;left:31px;top:465px;width:630px;height:1px;background:#000"></div>
<div class="t tc" style="left:5px;width:25px;top:470px;font-size:13px;color:#27303d">15</div>
<div style="position:absolute;left:5px;top:485px;width:25px;height:1px;background:#c9902f"></div>
<div style="position:absolute;left:31px;top:485px;width:630px;height:1px;background:#000"></div>
<div class="t tc" style="left:5px;width:25px;top:490px;font-size:13px;color:#27303d">16</div>
<div style="position:absolute;left:5px;top:505px;width:25px;height:1px;background:#c9902f"></div>
<div style="position:absolute;left:31px;top:505px;width:630px;height:1px;background:#000"></div>
<div class="t tc" style="left:5px;width:25px;top:510px;font-size:13px;color:#27303d">17</div>
<div style="position:absolute;left:5px;top:525px;width:25px;height:1px;background:#c9902f"></div>
<div style="position:absolute;left:31px;top:525px;width:630px;height:1px;background:#000"></div>
<div class="t tc" style="left:5px;width:25px;top:530px;font-size:13px;color:#27303d">18</div>
<div style="position:absolute;left:5px;top:545px;width:25px;height:1px;background:#c9902f"></div>
<div style="position:absolute;left:31px;top:545px;width:630px;height:1px;background:#000"></div>
<div class="t tc" style="left:5px;width:25px;top:550px;font-size:13px;color:#27303d">19</div>
<div style="position:absolute;left:5px;top:565px;width:25px;height:1px;background:#c9902f"></div>
<div style="position:absolute;left:31px;top:565px;width:630px;height:1px;background:#000"></div>
<div class="t tc" style="left:5px;width:25px;top:570px;font-size:13px;color:#27303d">20</div>
<div style="position:absolute;left:5px;top:585px;width:25px;height:1px;background:#c9902f"></div>
<div style="position:absolute;left:31px;top:585px;width:630px;height:1px;background:#000"></div>
<div class="t tc" style="left:5px;width:25px;top:590px;font-size:13px;color:#27303d">21</div>
<div style="position:absolute;left:191px;top:186px;width:1px;height:418px;background:#000"></div>
<div style="position:absolute;left:660px;top:186px;width:1px;height:418px;background:#000"></div>
<div style="position:absolute;left:352px;top:186px;width:1px;height:18px;background:#000"></div>
<div style="position:absolute;left:351px;top:205px;width:3px;height:399px;background:#000"></div>
<div style="position:absolute;left:352px;top:205px;width:1px;height:399px;background:#fff"></div>
<div style="position:absolute;left:513px;top:186px;width:1px;height:18px;background:#000"></div>
<div style="position:absolute;left:512px;top:205px;width:3px;height:399px;background:#000"></div>
<div style="position:absolute;left:513px;top:205px;width:1px;height:399px;background:#fff"></div>
<div style="position:absolute;left:352px;top:204px;width:162px;height:1px;background:#0000ff"></div>
<div style="position:absolute;left:352px;top:205px;width:162px;height:1px;background:#fff"></div>
<div style="position:absolute;left:353px;top:206px;width:160px;height:1px;background:#000"></div>
<div class="t tc ct" style="left:31px;width:160px;top:190px;letter-spacing:0.35px">Наименование товара</div>
<div class="t tc ct" style="left:192px;width:160px;top:190px;letter-spacing:0.6px">Дата</div>
<div class="t ct" style="left:34px;top:210px;letter-spacing:0.3px">Картофель</div>
<div class="t tc ct" style="left:192px;width:160px;top:210px">01.05.2016</div>
<div class="t tc ct" style="left:353px;width:160px;top:210px">1</div>
<div class="t tc ct" style="left:514px;width:146px;top:210px">10526</div>
<div class="t ct" style="left:34px;top:230px;letter-spacing:0.3px">Картофель</div>
<div class="t tc ct" style="left:192px;width:160px;top:230px">02.05.2016</div>
<div class="t tc ct" style="left:353px;width:160px;top:230px">6</div>
<div class="t tc ct" style="left:514px;width:146px;top:230px">11240</div>
<div class="t ct" style="left:34px;top:250px;letter-spacing:0.3px">Картофель</div>
<div class="t tc ct" style="left:192px;width:160px;top:250px">03.05.2016</div>
<div class="t tc ct" style="left:353px;width:160px;top:250px">11</div>
<div class="t tc ct" style="left:514px;width:146px;top:250px">9850</div>
<div class="t ct" style="left:34px;top:270px;letter-spacing:0.3px">Картофель</div>
<div class="t tc ct" style="left:192px;width:160px;top:270px">04.05.2016</div>
<div class="t tc ct" style="left:353px;width:160px;top:270px">16</div>
<div class="t tc ct" style="left:514px;width:146px;top:270px">10012</div>
<div class="t ct" style="left:34px;top:290px;letter-spacing:0.3px">Картофель</div>
<div class="t tc ct" style="left:192px;width:160px;top:290px">06.05.2016</div>
<div class="t tc ct" style="left:353px;width:160px;top:290px">26</div>
<div class="t tc ct" style="left:514px;width:146px;top:290px">12458</div>
<div class="t ct" style="left:34px;top:310px;letter-spacing:0.3px">Картофель</div>
<div class="t tc ct" style="left:192px;width:160px;top:310px">07.05.2016</div>
<div class="t tc ct" style="left:353px;width:160px;top:310px">31</div>
<div class="t tc ct" style="left:514px;width:146px;top:310px">11047</div>
<div class="t ct" style="left:34px;top:330px;letter-spacing:0.3px">Мясо</div>
<div class="t tc ct" style="left:192px;width:160px;top:330px">01.05.2016</div>
<div class="t tc ct" style="left:353px;width:160px;top:330px">3</div>
<div class="t tc ct" style="left:514px;width:146px;top:330px">25874</div>
<div class="t ct" style="left:34px;top:350px;letter-spacing:0.3px">Мясо</div>
<div class="t tc ct" style="left:192px;width:160px;top:350px">02.05.2016</div>
<div class="t tc ct" style="left:353px;width:160px;top:350px">8</div>
<div class="t tc ct" style="left:514px;width:146px;top:350px">24580</div>
<div class="t ct" style="left:34px;top:370px;letter-spacing:0.3px">Мясо</div>
<div class="t tc ct" style="left:192px;width:160px;top:370px">03.05.2016</div>
<div class="t tc ct" style="left:353px;width:160px;top:370px">13</div>
<div class="t tc ct" style="left:514px;width:146px;top:370px">26941</div>
<div class="t ct" style="left:34px;top:390px;letter-spacing:0.3px">Мясо</div>
<div class="t tc ct" style="left:192px;width:160px;top:390px">04.05.2016</div>
<div class="t tc ct" style="left:353px;width:160px;top:390px">18</div>
<div class="t tc ct" style="left:514px;width:146px;top:390px">23654</div>
<div class="t ct" style="left:34px;top:410px;letter-spacing:0.3px">Мясо</div>
<div class="t tc ct" style="left:192px;width:160px;top:410px">05.05.2016</div>
<div class="t tc ct" style="left:353px;width:160px;top:410px">23</div>
<div class="t tc ct" style="left:514px;width:146px;top:410px">27015</div>
<div class="t ct" style="left:34px;top:430px;letter-spacing:0.3px">Мясо</div>
<div class="t tc ct" style="left:192px;width:160px;top:430px">06.05.2016</div>
<div class="t tc ct" style="left:353px;width:160px;top:430px">28</div>
<div class="t tc ct" style="left:514px;width:146px;top:430px">25410</div>
<div class="t ct" style="left:34px;top:450px;letter-spacing:0.3px">Мясо</div>
<div class="t tc ct" style="left:192px;width:160px;top:450px">07.05.2016</div>
<div class="t tc ct" style="left:353px;width:160px;top:450px">33</div>
<div class="t tc ct" style="left:514px;width:146px;top:450px">24789</div>
<div class="t ct" style="left:34px;top:470px;letter-spacing:0.3px">Рыба</div>
<div class="t tc ct" style="left:192px;width:160px;top:470px">01.05.2016</div>
<div class="t tc ct" style="left:353px;width:160px;top:470px">2</div>
<div class="t tc ct" style="left:514px;width:146px;top:470px">14520</div>
<div class="t ct" style="left:34px;top:490px;letter-spacing:0.3px">Рыба</div>
<div class="t tc ct" style="left:192px;width:160px;top:490px">02.05.2016</div>
<div class="t tc ct" style="left:353px;width:160px;top:490px">7</div>
<div class="t tc ct" style="left:514px;width:146px;top:490px">13987</div>
<div class="t ct" style="left:34px;top:510px;letter-spacing:0.3px">Рыба</div>
<div class="t tc ct" style="left:192px;width:160px;top:510px">03.05.2016</div>
<div class="t tc ct" style="left:353px;width:160px;top:510px">12</div>
<div class="t tc ct" style="left:514px;width:146px;top:510px">15002</div>
<div class="t ct" style="left:34px;top:530px;letter-spacing:0.3px">Рыба</div>
<div class="t tc ct" style="left:192px;width:160px;top:530px">04.05.2016</div>
<div class="t tc ct" style="left:353px;width:160px;top:530px">17</div>
<div class="t tc ct" style="left:514px;width:146px;top:530px">14236</div>
<div class="t ct" style="left:34px;top:550px;letter-spacing:0.3px">Рыба</div>
<div class="t tc ct" style="left:192px;width:160px;top:550px">05.05.2016</div>
<div class="t tc ct" style="left:353px;width:160px;top:550px">22</div>
<div class="t tc ct" style="left:514px;width:146px;top:550px">13654</div>
<div class="t ct" style="left:34px;top:570px;letter-spacing:0.3px">Рыба</div>
<div class="t tc ct" style="left:192px;width:160px;top:570px">07.05.2016</div>
<div class="t tc ct" style="left:353px;width:160px;top:570px">32</div>
<div class="t tc ct" style="left:514px;width:146px;top:570px">13858</div>
<div class="t ct" style="left:34px;top:590px;letter-spacing:0.3px">Сахар</div>
<div class="t tc ct" style="left:192px;width:160px;top:590px">01.05.2016</div>
<div class="t tc ct" style="left:353px;width:160px;top:590px">4</div>
<div class="t tc ct" style="left:514px;width:146px;top:590px">8556</div>
<!-- ===== vertical scrollbar ===== -->
<div style="position:absolute;left:843px;top:166px;width:15px;height:438px;background:#e8ebef;border-left:1px solid #c5ccd6"></div>
<div style="position:absolute;left:844px;top:167px;width:13px;height:8px;background:#fff;border:1px solid #8d97a6"></div>
<div style="position:absolute;left:847px;top:170px;width:7px;height:1px;background:#6d7684"></div>
<div class="dd" style="left:846px;top:180px;border-top:0;border-bottom:5px solid #4a515c;border-left-width:4.5px;border-right-width:4.5px"></div>
<div style="position:absolute;left:844px;top:192px;width:13px;height:190px;background:linear-gradient(90deg,#fdfdfe,#e9ecf1);border:1px solid #a0a9b7;border-radius:2px"></div>
<div style="position:absolute;left:847px;top:284px;width:7px;height:1px;background:#7d8796;box-shadow:0 2px 0 #7d8796,0 4px 0 #7d8796,0 6px 0 #7d8796"></div>
<div class="dd" style="left:846px;top:593px;border-top:5px solid #4a515c;border-left-width:4.5px;border-right-width:4.5px"></div>
<!-- ===== sheet tab bar ===== -->
<div style="position:absolute;left:5px;top:604px;width:853px;height:17px;background:#dce1e8;border-top:1px solid #9ea7b5"></div>
<svg style="left:10px;top:608px" width="54" height="9" viewBox="0 0 54 9">
 <g fill="#4f5866"><rect x="0" y="0" width="1.500" height="9"/><path d="M7 0 V9 L2 4.500 Z"/><path d="M21 0 V9 L16 4.500 Z"/><path d="M31 0 V9 L36 4.500 Z"/><path d="M45 0 V9 L50 4.500 Z"/><rect x="50.500" y="0" width="1.500" height="9"/></g>
</svg>
<svg style="left:64px;top:604px" width="190" height="17" viewBox="0 0 190 17">
 <path d="M117 0.5 L106 15.500 H163 L174 0.500" fill="#e2e6ec" stroke="#8d97a6"/>
 <path d="M66 0.500 L55 15.500 H110 L121 0.500" fill="#e2e6ec" stroke="#8d97a6"/>
 <path d="M3 0 V15.500 H56 L68 0" fill="#fff" stroke="#8d97a6"/>
 <path d="M168 0.500 L160 12.500 H180 L189 0.500" fill="#e2e6ec" stroke="#8d97a6"/>
</svg>
<div class="t" style="left:77px;top:606px;font-size:13px;font-weight:700;color:#222;letter-spacing:0.2px">Лист1</div>
<div class="t" style="left:131px;top:606px;font-size:13px;color:#333;letter-spacing:-0.2px">Лист2</div>
<div class="t" style="left:184px;top:606px;font-size:13px;color:#333;letter-spacing:-0.2px">Лист3</div>
<svg style="left:238px;top:607px" width="14" height="10" viewBox="0 0 14 10"><rect x="3.500" y="2.500" width="9" height="7" fill="#fff" stroke="#5f7396"/><path d="M3 0 L3.800 2.200 L6 3 L3.800 3.800 L3 6 L2.200 3.800 L0 3 L2.200 2.200 Z" fill="#f3b631"/></svg>
<!-- horizontal scrollbar -->
<div style="position:absolute;left:507px;top:604px;width:351px;height:17px;background:#dfe3e9"></div>
<div style="position:absolute;left:508px;top:607px;width:6px;height:13px;background:#fff;border:1px solid #6d7684"></div>
<div style="position:absolute;left:510px;top:610px;width:1px;height:7px;background:#6d7684"></div>
<div class="dd" style="left:519px;top:608px;border:0;border-top:5px solid transparent;border-bottom:5px solid transparent;border-right:6px solid #4a515c"></div>
<div style="position:absolute;left:532px;top:606px;width:249px;height:14px;background:linear-gradient(180deg,#fdfdfe,#e6e9ee);border:1px solid #a0a9b7;border-radius:2px"></div>
<div style="position:absolute;left:652px;top:610px;width:1px;height:6px;background:#8d97a6;box-shadow:2px 0 0 #8d97a6,4px 0 0 #8d97a6,6px 0 0 #8d97a6"></div>
<div class="dd" style="left:822px;top:608px;border:0;border-top:5px solid transparent;border-bottom:5px solid transparent;border-left:6px solid #4a515c"></div>
<div style="position:absolute;left:835px;top:607px;width:6px;height:13px;background:#fff;border:1px solid #6d7684"></div>
<div style="position:absolute;left:837px;top:610px;width:1px;height:7px;background:#6d7684"></div>
<!-- ===== status bar ===== -->
<div style="position:absolute;left:5px;top:621px;width:853px;height:21px;background:linear-gradient(180deg,#e6e9ee 0,#d7dce4 50%,#cdd3dc 100%);border-top:1px solid #9aa3b1"></div>
<div class="t" style="left:13px;top:625px;color:#333;letter-spacing:0.05px">Готово</div>
<div style="position:absolute;left:59px;top:623px;width:1px;height:18px;background:#aab2be;box-shadow:1px 0 0 #f4f6f9"></div>
<svg style="left:69px;top:624px" width="15" height="14" viewBox="0 0 15 14"><rect x="2.500" y="2.500" width="12" height="11" fill="#fff" stroke="#5776b5"/><rect x="3" y="3" width="11" height="3" fill="#5e86d4"/><path d="M4 8 H13 M4 10 H13 M4 12 H13" stroke="#8fa6d0"/><circle cx="3" cy="3" r="2.800" fill="#e0452c" stroke="#a52a16" stroke-width=".6"/></svg>
<div style="position:absolute;left:94px;top:623px;width:1px;height:18px;background:#aab2be;box-shadow:1px 0 0 #f4f6f9"></div>
<div class="t" style="left:307px;top:625px;color:#333;letter-spacing:-0.6px">Среднее: 17,42857143</div>
<div class="t" style="left:437px;top:625px;color:#333;letter-spacing:-0.38px">Количество: 28</div>
<div class="t" style="left:534px;top:625px;color:#333;letter-spacing:-0.7px">Сумма: 488</div>
<div style="position:absolute;left:602px;top:623px;width:1px;height:18px;background:#aab2be;box-shadow:1px 0 0 #f4f6f9"></div>
<div class="hl" style="left:607px;top:622px;width:19px;height:19px;border-radius:2px"></div>
<svg style="left:611px;top:626px" width="12" height="11" viewBox="0 0 12 11"><rect x="0.500" y="0.500" width="11" height="10" fill="#fff" stroke="#4f5866"/><path d="M0.500 3.500 H11.500 M0.500 6.500 H11.500 M4.500 0.500 V10.500 M8 0.500 V10.500" stroke="#4f5866" stroke-width=".9"/></svg>
<svg style="left:628px;top:625px" width="13" height="12" viewBox="0 0 13 12"><rect x="0.500" y="0.500" width="12" height="11" fill="#c9ced6" stroke="#4f5866"/><rect x="3" y="2.500" width="7" height="7" fill="#fff" stroke="#6d7684" stroke-width=".8"/><path d="M4.500 5 H8.500 M4.500 7 H8.500" stroke="#8d97a6" stroke-width=".8"/></svg>
<svg style="left:644px;top:625px" width="15" height="12" viewBox="0 0 15 12"><rect x="0.500" y="0.500" width="14" height="11" fill="#d5d9df" stroke="#4f5866"/><rect x="6" y="1" width="8" height="6" fill="#f4f6f9"/><path d="M5.500 0.500 V7.500 H14.500 M10 0.500 V7.500" stroke="#4f5866" fill="none"/></svg>
<div class="t" style="left:671px;top:625px;color:#333;letter-spacing:-0.4px">100%</div>
<svg style="left:707px;top:623px" width="16" height="16" viewBox="0 0 16 16"><circle cx="8" cy="8" r="6.800" fill="#f6f7f9" stroke="#5b6472" stroke-width="1.200"/><path d="M4.500 8 H11.500" stroke="#3f4650" stroke-width="1.800"/></svg>
<div style="position:absolute;left:723px;top:631px;width:101px;height:1px;background:#6d7684;box-shadow:0 1px 0 #f4f6f9"></div>
<svg style="left:769px;top:624px" width="10" height="14" viewBox="0 0 10 14"><path d="M1 0.500 H9 V8.500 L5 13 L1 8.500 Z" fill="#f1f3f6" stroke="#5b6472"/></svg>
<svg style="left:823px;top:623px" width="16" height="16" viewBox="0 0 16 16"><circle cx="8" cy="8" r="6.800" fill="#f6f7f9" stroke="#5b6472" stroke-width="1.200"/><path d="M4.500 8 H11.500 M8 4.500 V11.500" stroke="#3f4650" stroke-width="1.800"/></svg>
<svg style="left:848px;top:630px" width="11" height="11" viewBox="0 0 11 11"><g fill="#9aa3b1"><rect x="8" y="0" width="2" height="2"/><rect x="4" y="4" width="2" height="2"/><rect x="8" y="4" width="2" height="2"/><rect x="0" y="8" width="2" height="2"/><rect x="4" y="8" width="2" height="2"/><rect x="8" y="8" width="2" height="2"/></g></svg>
<!-- window frame lines -->
<div style="position:absolute;left:860px;top:52px;width:6px;height:145px;background:#d9e9fa"></div>
<div style="position:absolute;left:860px;top:197px;width:6px;height:443px;background:linear-gradient(90deg,#b3d4f5 0,#b3d4f5 3px,#f0faff 3px,#f0faff 4px,#141820 4px)"></div>
<div style="position:absolute;left:3px;top:51px;width:1px;height:593px;background:#e0f0ff"></div>
<div style="position:absolute;left:4px;top:52px;width:1px;height:591px;background:#60718f"></div>
<div style="position:absolute;left:858px;top:52px;width:1px;height:591px;background:#60718f"></div>
<div style="position:absolute;left:859px;top:51px;width:1px;height:593px;background:#e8f3ff"></div>
<div style="position:absolute;left:4px;top:642px;width:855px;height:1px;background:#60718f"></div>
<div style="position:absolute;left:3px;top:643px;width:857px;height:1px;background:#e8f3ff"></div>
<div style="position:absolute;left:-8px;top:-8px;width:874px;height:658px;border:1px solid #141820;border-right-width:2px;border-radius:8px;box-shadow:0 0 0 3px #fff,inset 0 0 0 1px #f0faff"></div>
<!-- ===== mini toolbar ===== -->
<div style="position:absolute;left:496px;top:152px;width:250px;height:52px;background:linear-gradient(180deg,#fefefe,#f3f5f8);border:1px solid #b4bcc8;border-radius:3px;box-shadow:1px 2px 4px rgba(0,0,0,.25)"></div>
<div class="box" style="left:498px;top:154px;width:60px;height:22px"></div>
<div class="box" style="left:557px;top:154px;width:42px;height:22px"></div>
<div class="rl" style="left:502px;top:158px;color:#000;letter-spacing:0;font-size:11.500px">Calibri</div>
<div class="rl" style="left:561px;top:158px;color:#000;letter-spacing:0;font-size:11.500px">11</div>
<div class="dd" style="left:548px;top:163px"></div>
<div class="dd" style="left:588px;top:163px"></div>
<div class="rl" style="left:604px;top:157px;font:bold 15px/16px 'Liberation Serif',serif;height:16px;color:#3a3a3a;letter-spacing:0;transform:scaleX(1.1);transform-origin:0 0">А</div>
<div class="dd" style="left:613px;top:157px;border-top:0;border-bottom:3px solid #2f55c4"></div>
<div class="rl" style="left:627px;top:160px;font:bold 11px/12px 'Liberation Serif',serif;height:12px;color:#3a3a3a;letter-spacing:0">А</div>
<div class="dd" style="left:633px;top:158px;border-top-color:#2f55c4"></div>
<svg style="left:646px;top:156px" width="18" height="17" viewBox="0 0 18 17">
 <rect x="0.500" y="0.500" width="15" height="8" fill="#4a6fc6" stroke="#2d4a96"/>
 <ellipse cx="8" cy="4.500" rx="4.500" ry="2.600" fill="#9fb8ea" stroke="#dfe8fa" stroke-width=".7"/>
 <g fill="#f5c646" stroke="#b07a18" stroke-width=".6"><ellipse cx="10.500" cy="15" rx="4" ry="1.500"/><ellipse cx="10.500" cy="13" rx="4" ry="1.500"/><ellipse cx="10.500" cy="11" rx="4" ry="1.500"/><ellipse cx="10.500" cy="9" rx="4" ry="1.500"/><ellipse cx="5" cy="13.500" rx="3" ry="1.300"/></g>
</svg>
<div class="dd" style="left:668px;top:163px"></div>
<div class="rl" style="left:681px;top:157px;font-size:14px;line-height:16px;height:16px;color:#111;letter-spacing:0">%</div>
<div class="rl" style="left:702px;top:158px;font-size:12px;line-height:16px;height:16px;color:#222;letter-spacing:-1px;transform:scale(.86,1.12);transform-origin:0 50%">000</div>
<svg style="left:725px;top:157px" width="17" height="15" viewBox="0 0 17 15">
 <rect x="0.500" y="0.500" width="16" height="14" fill="#dbe6f5" stroke="#6e88b3"/>
 <path d="M0.500 3.500 H16.500 M0.500 11.500 H16.500 M5.500 0.500 V3.500 M11 0.500 V3.500 M5.500 11.500 V14.500 M11 11.500 V14.500" stroke="#6e88b3" fill="none"/>
 <rect x="1" y="4" width="15" height="7" fill="#fff"/>
 <text x="8.500" y="10.300" text-anchor="middle" font-family="Liberation Serif,serif" font-weight="700" font-size="9" fill="#111">a</text>
 <path d="M1.500 7.500 H5 M15.500 7.500 H12" stroke="#333" stroke-width="1"/>
</svg>
<div class="rl" style="left:502px;top:181px;font:bold 14px/16px 'Liberation Serif',serif;height:16px;color:#111;letter-spacing:0;transform:scaleX(1.08);transform-origin:0 0">Ж</div>
<div class="rl" style="left:525px;top:181px;font:italic bold 14px/16px 'Liberation Serif',serif;height:16px;color:#111;letter-spacing:0">К</div>
<div class="hl" style="left:542px;top:178px;width:22px;height:22px"></div>
<svg style="left:546px;top:184px" width="15" height="12" viewBox="0 0 15 12" shape-rendering="crispEdges"><g fill="#111"><rect x="0" y="0" width="14" height="1"/><rect x="2" y="2" width="10" height="1"/><rect x="0" y="4" width="14" height="1"/><rect x="2" y="6" width="10" height="1"/><rect x="0" y="8" width="14" height="1"/><rect x="2" y="10" width="10" height="1"/></g></svg>
<svg style="left:568px;top:179px" width="17" height="18" viewBox="0 0 17 18">
 <path d="M12.500 5.500 C15.500 6 16.300 9 15.800 12.600 H13 C13.800 11 14.200 9 13.800 7.500 Z" fill="#3f74d6"/>
 <path d="M7.300 2.400 L13.900 7.600 L8.400 12.500 L2 7.300 Z" fill="#f2f6fc" stroke="#2a4a8a" stroke-width="1"/>
 <path d="M5 9.600 L8.400 12.300 L13.500 7.800 Z" fill="#c4d6f2"/>
 <path d="M5.600 5 V1.800 C5.600 0.300 8.200 0.300 8.200 1.800 V5.500" fill="none" stroke="#4d5f7c" stroke-width=".9"/>
 <circle cx="8.200" cy="5.800" r=".9" fill="#59657a"/>
 <rect x="0" y="13" width="16" height="4" fill="#ffff00"/>
</svg>
<div class="dd" style="left:588px;top:186px"></div>
<div class="rl" style="left:601px;top:178px;font:bold 16px/16px 'Liberation Serif',serif;height:16px;color:#24408e;letter-spacing:0">А</div>
<div style="position:absolute;left:598px;top:192px;width:16px;height:4px;background:#ff0000"></div>
<div class="dd" style="left:622px;top:186px"></div>
<svg style="left:636px;top:181px" width="14" height="14" viewBox="0 0 14 14" shape-rendering="crispEdges">
 <path d="M0 0.500 H13 M0 6.500 H13 M0.500 0 V12 M6.500 0 V12 M12.500 0 V12" stroke="#7a7a7a" stroke-width="1" stroke-dasharray="1 1" fill="none"/>
 <path d="M0 13 H13" stroke="#111" stroke-width="1"/>
</svg>
<div class="dd" style="left:656px;top:186px"></div>
<svg style="left:668px;top:180px" width="17" height="17" viewBox="0 0 17 17">
 <path d="M1 4.200 L4.300 1.700 V3.400 H8 V5 H4.300 V6.700 Z" fill="#2f55c4"/>
 <text x="16.200" y="7" text-anchor="end" font-family="Liberation Sans,sans-serif" font-weight="700" font-size="8" fill="#222">,0</text>
 <text x="16.200" y="15.300" text-anchor="end" font-family="Liberation Sans,sans-serif" font-weight="700" font-size="8" fill="#222">,00</text>
</svg>
<svg style="left:690px;top:180px" width="17" height="17" viewBox="0 0 17 17">
 <text x="16" y="7" text-anchor="end" font-family="Liberation Sans,sans-serif" font-weight="700" font-size="8" fill="#222">,00</text>
 <path d="M8 12.500 L4.700 10 V11.700 H1 V13.300 H4.700 V15 Z" fill="#2f55c4"/>
 <text x="16" y="15.300" text-anchor="end" font-family="Liberation Sans,sans-serif" font-weight="700" font-size="8" fill="#222">,0</text>
</svg>
<svg style="left:712px;top:180px" width="17" height="16" viewBox="0 0 17 16">
 <path d="M10 5 L14.500 0.800 L16.300 2.600 L12 7 Z" fill="#4a67b8" stroke="#2f4687" stroke-width=".6"/>
 <path d="M7.500 4.500 L12.500 9.500 L11 11 L6 6 Z" fill="#9aa3b0" stroke="#5e6877" stroke-width=".6"/>
 <path d="M6 6 L11 11 L8.500 15 L5.500 13 L4 14 L1 9.500 Z" fill="#f3d27c" stroke="#b58e35" stroke-width=".7"/>
</svg>

<!-- ===== context menu ===== -->
<div style="position:absolute;left:496px;top:218px;width:270px;height:353px;background:#fff;border:1px solid #a8b0bc;border-radius:2px;box-shadow:2px 2px 4px rgba(0,0,0,.3)"></div>
<div style="position:absolute;left:497px;top:219px;width:26px;height:351px;background:#fff;border-right:1px solid #e4e6ea"></div>
<div style="position:absolute;left:524px;top:264px;width:241px;height:18px;background:#e9ecf2"></div>
<div style="position:absolute;left:498px;top:430px;width:266px;height:23px;border:1px solid #e8c067;border-radius:3px;background:linear-gradient(180deg,#fef5d6 0,#fce6a6 45%,#fbd979 55%,#fde9ad 100%)"></div>
<div class="mi" style="left:531px;top:224px;letter-spacing:-0.41px">В<u>ы</u>резать</div>
<div class="mi" style="left:531px;top:246px;letter-spacing:-0.05px"><u>К</u>опировать</div>
<div class="mi" style="left:531px;top:268px;font-weight:700;letter-spacing:-0.65px">Параметры вставки:</div>
<div class="mi" style="left:531px;top:316px;letter-spacing:-0.37px"><u>С</u>пециальная вставка...</div>
<div class="msep" style="top:335px"></div>
<div class="mi" style="left:531px;top:341px;letter-spacing:-0.44px">Вс<u>т</u>авить...</div>
<div class="mi" style="left:531px;top:364px;letter-spacing:-0.48px"><u>У</u>далить...</div>
<div class="mi" style="left:531px;top:386px;letter-spacing:-0.1px">Очистить содер<u>ж</u>имое</div>
<div class="msep" style="top:405px"></div>
<div class="mi" style="left:531px;top:412px;letter-spacing:-0.36px"><u>Ф</u>ильтр</div>
<div class="mi" style="left:531px;top:434px;letter-spacing:-0.1px"><u>С</u>ортировка</div>
<div class="mi" style="left:531px;top:460px;letter-spacing:-0.17px">Вставить приме<u>ч</u>ание</div>
<div class="msep" style="top:480px"></div>
<div class="mi" style="left:531px;top:486px;letter-spacing:-0.27px">Формат <u>я</u>чеек...</div>
<div class="mi" style="left:531px;top:508px;letter-spacing:-0.24px">Вы<u>б</u>рать из раскрывающегося списка...</div>
<div class="mi" style="left:531px;top:530px;letter-spacing:-0.18px">Присвоит<u>ь</u> имя...</div>
<div class="mi" style="left:531px;top:552px;letter-spacing:-0.36px">Гип<u>е</u>рссылка...</div>
<div class="dd" style="left:751px;top:414px;border:0;border-top:4.500px solid transparent;border-bottom:4.500px solid transparent;border-left:5px solid #6b7280"></div>
<div class="dd" style="left:751px;top:437px;border:0;border-top:4.500px solid transparent;border-bottom:4.500px solid transparent;border-left:5px solid #6b7280"></div>
<!-- paste option button -->
<div class="hl" style="left:527px;top:286px;width:23px;height:23px;border-radius:2px;background:linear-gradient(180deg,#fde9b0,#fcdc8c);border-color:#e8c272"></div>
<svg style="left:530px;top:286px" width="17" height="22" viewBox="0 0 17 22">
 <rect x="1.500" y="2.500" width="14" height="17" rx="1.500" fill="#f5d9a0" stroke="#c9a35c" stroke-width=".8"/>
 <rect x="5.500" y="0.500" width="6" height="3.500" rx="1" fill="#eef0f3" stroke="#7d8794" stroke-width=".8"/>
 <path d="M4.500 7.500 H10 L13.500 11 V19.500 H4.500 Z" fill="#fff" stroke="#5f6b7e" stroke-width=".9"/>
 <path d="M10 7.500 V11 H13.500" fill="#e8ecf2" stroke="#5f6b7e" stroke-width=".9"/>
 <path d="M6 12.500 H10 M6 14.500 H12 M6 16.500 H12" stroke="#8a93a3" stroke-width=".9"/>
</svg>
<!-- menu icons -->
<svg style="left:505px;top:224px" width="10" height="14" viewBox="0 0 10 14">
 <path d="M2 0.500 L6.300 9 M8 0.500 L3.700 9" stroke="#6b7585" stroke-width="1.500" fill="none"/>
 <circle cx="2.600" cy="10.800" r="1.900" fill="none" stroke="#2f55c4" stroke-width="1.600"/>
 <circle cx="7.400" cy="10.800" r="1.900" fill="none" stroke="#2f55c4" stroke-width="1.600"/>
</svg>
<svg style="left:502px;top:246px" width="15" height="13" viewBox="0 0 15 13">
 <path d="M0.500 0.500 H5.500 L7.500 2.500 V8.500 H0.500 Z" fill="#fff" stroke="#5b74a8"/>
 <path d="M2 3.500 H6 M2 5.500 H6" stroke="#3a66c8" stroke-width="1"/>
 <path d="M6.500 3.500 H11.500 L14.500 6.500 V12.500 H6.500 Z" fill="#fff" stroke="#2f4f9f"/>
 <path d="M8 7.500 H13 M8 9.500 H13 M8 11 H13" stroke="#3a66c8" stroke-width="1"/>
</svg>
<svg style="left:502px;top:267px" width="17" height="15" viewBox="0 0 17 15">
 <rect x="0.500" y="2.500" width="12" height="11" rx="1.500" fill="#e9a93f" stroke="#8f6420"/>
 <rect x="3.500" y="0.500" width="6" height="3.500" rx="1" fill="#dfe3e9" stroke="#5d4a2a" stroke-width=".8"/>
 <path d="M6.500 7.500 H13 L16 10 V14.500 H6.500 Z" fill="#f2f4f8" stroke="#3f4a5c"/>
 <path d="M8.500 10.500 H14 M8.500 12.500 H14" stroke="#6d7890" stroke-width=".9"/>
</svg>
<svg style="left:502px;top:458px" width="16" height="16" viewBox="0 0 16 16">
 <defs><linearGradient id="nt" x1="0" y1="0" x2="1" y2="1"><stop offset="0" stop-color="#f7dc7a"/><stop offset="1" stop-color="#cfa23a"/></linearGradient></defs>
 <path d="M2.500 4.500 H14.500 V14.500 H2.500 Z" fill="url(#nt)" stroke="#9a7a2a" stroke-width=".9"/>
 <circle cx="12.500" cy="12.500" r="1" fill="#7a5c1a"/>
 <path d="M3 0 L3.900 2.100 L6 3 L3.900 3.900 L3 6 L2.100 3.900 L0 3 L2.100 2.100 Z" fill="#f9dc52" stroke="#c49a32" stroke-width=".4"/>
</svg>
<svg style="left:502px;top:485px" width="17" height="16" viewBox="0 0 17 16">
 <rect x="0.500" y="4.500" width="12" height="11" fill="#fff" stroke="#5a677b"/>
 <rect x="1" y="5" width="11" height="2.500" fill="#7d9bd6"/>
 <path d="M2.500 9.500 H10.500 M2.500 11.500 H10.500 M2.500 13.500 H8" stroke="#8d97a6" stroke-width=".9"/>
 <path d="M5 6 L10 0.800 L14 2 L16 6 L13.500 5 L11 7.500 Z" fill="#efc866" stroke="#9a7a2a" stroke-width=".7"/>
 <path d="M10 0.800 L16 4" stroke="#4f8a3a" stroke-width="1.400"/>
</svg>
<svg style="left:502px;top:551px" width="17" height="17" viewBox="0 0 17 17">
 <circle cx="7" cy="6.500" r="6" fill="#4f86d6" stroke="#2c5aa3" stroke-width=".8"/>
 <path d="M3 4 C5 2 7 3 8 5 C9 7 6 8 5 10 C4 9 2 7 3 4Z M9 2 C11 3 12 5 11 7 C10 6 9 4 9 2Z" fill="#6fbf4f"/>
 <rect x="3.500" y="11.500" width="6" height="4" rx="2" fill="#e8ebf0" stroke="#5a6270" stroke-width="1.100"/>
 <rect x="9" y="11.500" width="6" height="4" rx="2" fill="#e8ebf0" stroke="#5a6270" stroke-width="1.100"/>
</svg>

<!-- ===== sort submenu ===== -->
<div style="position:absolute;left:178px;top:431px;width:321px;height:134px;background:#fff;border:1px solid #a8b0bc;border-radius:2px;box-shadow:2px 2px 4px rgba(0,0,0,.3)"></div>
<div style="position:absolute;left:179px;top:432px;width:25px;height:132px;background:#fff;border-right:1px solid #e3e6ea"></div>
<div class="mi" style="left:212px;top:436px;letter-spacing:-0.08px">Сортировка от <u>м</u>инимального к максимальному</div>
<div class="mi" style="left:212px;top:458px;letter-spacing:-0.08px">Сортировка от м<u>а</u>ксимального к минимальному</div>
<div class="mi" style="left:212px;top:480px;letter-spacing:-0.25px">Сначала ячейки с выделенным ц<u>в</u>етом</div>
<div class="mi" style="left:212px;top:502px;letter-spacing:-0.27px">Сначала ячейки с выделенным <u>ш</u>рифтом</div>
<div class="mi" style="left:212px;top:524px;letter-spacing:-0.19px">Сначала ячейки с выделенным <u>з</u>начком</div>
<div class="mi" style="left:212px;top:546px;letter-spacing:-0.25px"><u>Н</u>астраиваемая сортировка...</div>
<svg style="left:184px;top:435px" width="16" height="17" viewBox="0 0 16 17">
 <text x="0" y="7.500" font-family="Liberation Serif,serif" font-weight="700" font-size="9.500" fill="#2f55b8">A</text>
 <text x="0" y="16" font-family="Liberation Serif,serif" font-weight="700" font-size="9.500" fill="#9c2f22">Я</text>
 <path d="M11.500 1 V14 M9 11 L11.500 15 L14 11" stroke="#111" stroke-width="1.200" fill="none"/>
</svg>
<svg style="left:184px;top:457px" width="16" height="17" viewBox="0 0 16 17">
 <text x="0" y="7.500" font-family="Liberation Serif,serif" font-weight="700" font-size="9.500" fill="#9c2f22">Я</text>
 <text x="0" y="16" font-family="Liberation Serif,serif" font-weight="700" font-size="9.500" fill="#2f55b8">A</text>
 <path d="M11.500 1 V14 M9 11 L11.500 15 L14 11" stroke="#111" stroke-width="1.200" fill="none"/>
</svg>
<svg style="left:184px;top:546px" width="15" height="15" viewBox="0 0 15 15">
 <rect x="0.500" y="0.500" width="14" height="14" fill="#e6eefb" stroke="#4a6fb5"/>
 <rect x="1" y="1" width="13" height="2" fill="#5e86d4"/>
 <path d="M5 4.500 V12 M3 9.500 L5 12.500 L7 9.500" stroke="#2f55c4" stroke-width="1.300" fill="none"/>
 <path d="M10 12.500 V5 M8 7.500 L10 4.500 L12 7.500" stroke="#d03a20" stroke-width="1.300" fill="none"/>
</svg>

<!-- ===== red hand-drawn ovals ===== -->
<svg style="left:0;top:0" width="866" height="650" viewBox="0 0 866 650">
 <path d="M522 430.500 C560 429.200 700 429.200 748 430.200 Q759 431 759.200 439 L759.200 446 Q759 453.200 748 454 C700 455.800 560 455.800 523 454.600 Q512.700 453.600 512.700 446 L512.700 439 Q512.700 431.200 522 430.500 Z" fill="none" stroke="#ed1c24" stroke-width="5" stroke-linejoin="round"/>
 <path d="M207 433.500 C260 432.600 420 432.600 476 433.600 Q487 434.500 487 442 L487 447 Q487 454 476 454.600 C420 456.500 260 457 208 456.600 Q198 456 198 448 L198 441 Q198 434 207 433.500 Z" fill="none" stroke="#ed1c24" stroke-width="5" stroke-linejoin="round"/>
 <path d="M198 440 V450" fill="none" stroke="#ed1c24" stroke-width="6" stroke-linecap="round"/>
</svg>
</div>
</body>
</html>
